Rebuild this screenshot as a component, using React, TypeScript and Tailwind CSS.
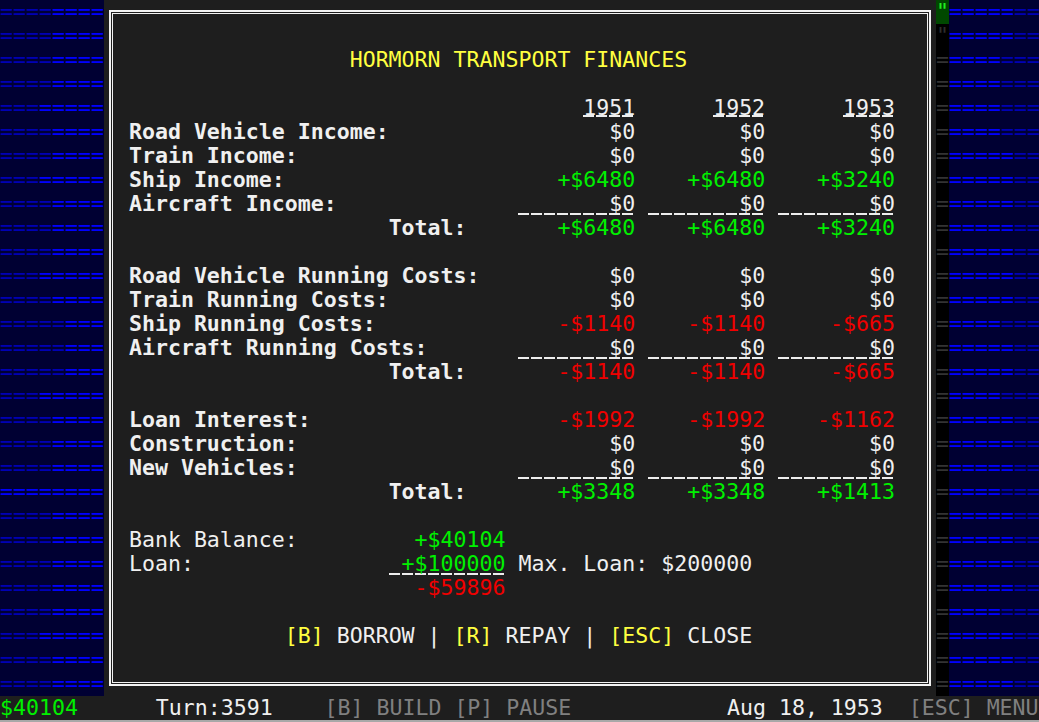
import React from "react";

type Seg = [number, string, string, ("f" | "y")?];

const G = "text-[#00f000]";
const R = "text-[#f00000]";
const W = "text-[#f0f0f0]";
const B = "font-bold text-[#f0f0f0]";
const Y = "text-[#ffff40]";
const GR = "text-[#808080]";

const UL_F =
  "inline-block h-6 align-top bg-[image:repeating-linear-gradient(90deg,#ededed_0px,#ededed_11px,transparent_11px,transparent_13px)] bg-no-repeat bg-[length:100%_2px] bg-[position:0_21px]";
const UL_Y =
  "inline-block h-6 align-top bg-[image:repeating-linear-gradient(90deg,#ededed_0px,#ededed_11px,transparent_11px,transparent_13px)] bg-no-repeat bg-[length:100%_2px] bg-[position:0_19px]";

// right-aligned value ending at column `end`
const v = (end: number, text: string, cls = W): Seg => [end - text.length + 1, text, cls];
const zeros = (): Seg[] => [v(48, "$0"), v(58, "$0"), v(68, "$0")];
const fields = (): Seg[] => [
  [40, "       $0", W, "f"],
  [50, "       $0", W, "f"],
  [60, "       $0", W, "f"],
];
const three = (a: string, b: string, c: string, cls: string): Seg[] => [
  v(48, a, cls),
  v(58, b, cls),
  v(68, c, cls),
];

// dialog rows 1..27, columns counted on the 80-column screen
const rows: Seg[][] = [
  [],
  [[27, "HORMORN TRANSPORT FINANCES", Y]],
  [],
  [
    [45, "1951", W, "y"],
    [55, "1952", W, "y"],
    [65, "1953", W, "y"],
  ],
  [[10, "Road Vehicle Income:", B], ...zeros()],
  [[10, "Train Income:", B], ...zeros()],
  [[10, "Ship Income:", B], ...three("+$6480", "+$6480", "+$3240", G)],
  [[10, "Aircraft Income:", B], ...fields()],
  [[30, "Total:", B], ...three("+$6480", "+$6480", "+$3240", G)],
  [],
  [[10, "Road Vehicle Running Costs:", B], ...zeros()],
  [[10, "Train Running Costs:", B], ...zeros()],
  [[10, "Ship Running Costs:", B], ...three("-$1140", "-$1140", "-$665", R)],
  [[10, "Aircraft Running Costs:", B], ...fields()],
  [[30, "Total:", B], ...three("-$1140", "-$1140", "-$665", R)],
  [],
  [[10, "Loan Interest:", B], ...three("-$1992", "-$1992", "-$1162", R)],
  [[10, "Construction:", B], ...zeros()],
  [[10, "New Vehicles:", B], ...fields()],
  [[30, "Total:", B], ...three("+$3348", "+$3348", "+$1413", G)],
  [],
  [[10, "Bank Balance:", W], v(38, "+$40104", G)],
  [
    [10, "Loan:", W],
    [30, " +$100000", G, "f"],
    [39, " Max. Loan: $200000", W],
  ],
  [v(38, "-$59896", R)],
  [],
  [
    [22, "[B]", Y],
    [25, " BORROW | ", W],
    [35, "[R]", Y],
    [38, " REPAY | ", W],
    [47, "[ESC]", Y],
    [52, " CLOSE", W],
  ],
  [],
];

function Line({ segs, start }: { segs: Seg[]; start: number }) {
  let cur = start;
  const out: React.ReactNode[] = [];
  segs.forEach(([col, text, cls, ul], i) => {
    if (col > cur) out.push(" ".repeat(col - cur));
    const extra = ul === "f" ? UL_F : ul === "y" ? UL_Y : "";
    out.push(
      <span key={i} className={`${cls} ${extra}`}>
        {text}
      </span>
    );
    cur = col + text.length;
  });
  return <div className="h-6 whitespace-pre">{out}</div>;
}

// water map: how many dark cells on the left of each row, bright ones on the right
const leftDark = [4, 4, 4, 4, 3, 4, 4, 3, 4, 4, 4, 3, 4, 5, 5, 5, 3, 4, 4, 4, 0, 4, 4, 4, 4, 4, 3, 4, 4];
const rightBright = [5, 5, 4, 4, 4, 4, 5, 5, 5, 5, 5, 5, 5, 4, 5, 5, 4, 5, 5, 5, 4, 5, 5, 5, 5, 4, 5, 5, 5];

const DARK = "text-[#0000b4]";
const BRIGHT = "text-[#0000ff]";

function Water({ n, dark, left }: { n: number; dark: number; left: boolean }) {
  return (
    <div className="h-6 whitespace-pre">
      {left ? (
        <>
          <span className={DARK}>{"=".repeat(dark)}</span>
          <span className={BRIGHT}>{"=".repeat(n - dark)}</span>
        </>
      ) : (
        <>
          <span className={BRIGHT}>{"=".repeat(n - dark)}</span>
          <span className={DARK}>{"=".repeat(dark)}</span>
        </>
      )}
    </div>
  );
}

export default function App() {
  return (
    <div className="w-[1039px] h-[722px] overflow-hidden bg-[#1e1e1e] font-['DejaVu_Sans_Mono',monospace] text-[21.57px] leading-6 flex flex-col">
      <div className="flex h-[696px]">
        {/* left water */}
        <div className="w-[104px] bg-[#000033]">
          {leftDark.map((d, i) => (
            <Water key={i} n={8} dark={d} left />
          ))}
        </div>

        {/* finances dialog */}
        <div className="w-[832px] bg-[#1e1e1e] pl-[5px] pr-[5px] py-[10px]">
          <div className="h-full border-2 border-[#f2f2f2] p-px">
            <div className="h-full border border-[#f2f2f2] pl-[3px] pt-[10px]">
              {rows.map((segs, i) => (
                <Line key={i} segs={segs} start={9} />
              ))}
            </div>
          </div>
        </div>

        {/* rail column */}
        <div className="w-[13px] bg-black">
          <div className="h-6 bg-[#004800] text-[#22ee22]">"</div>
          <div className="h-6 text-[#2e2e2e]">"</div>
          {Array.from({ length: 27 }).map((_, i) => (
            <div key={i} className="h-6 text-[#333333]">
              =
            </div>
          ))}
        </div>

        {/* right water */}
        <div className="flex-1 bg-[#000033] overflow-hidden">
          {rightBright.map((b, i) => (
            <Water key={i} n={7} dark={7 - b} left={false} />
          ))}
        </div>
      </div>

      {/* status bar */}
      <div className="h-6 whitespace-pre bg-[#1e1e1e]">
        <span className={G}>$40104</span>
        {"      "}
        <span className={W}>Turn:3591</span>
        {"    "}
        <span className={GR}>[B] BUILD [P] PAUSE</span>
        {"            "}
        <span className={W}>Aug 18, 1953</span>
        {"  "}
        <span className={GR}>[ESC] MENU</span>
      </div>
      <div className="h-[2px] bg-[#a8a8a8]" />
    </div>
  );
}
